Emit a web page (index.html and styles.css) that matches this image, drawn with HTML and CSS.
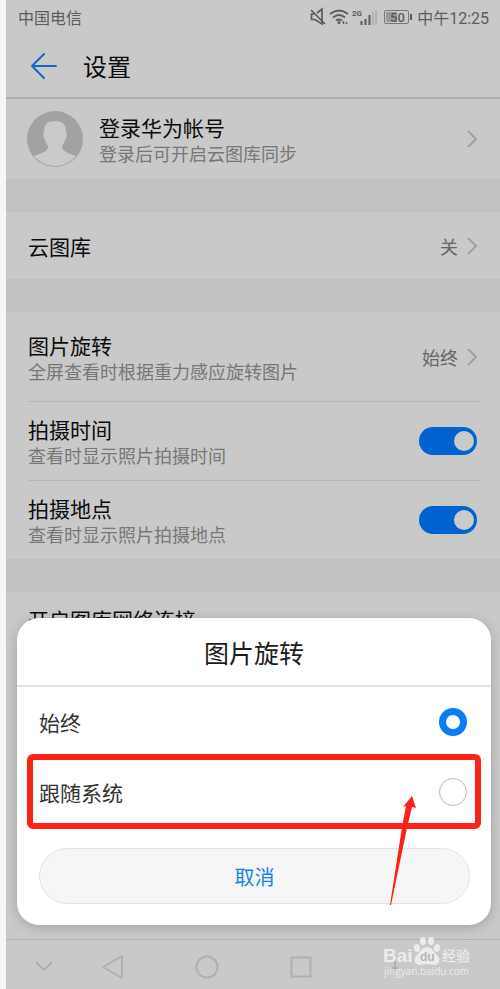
FILE: index.html
```html
<!DOCTYPE html>
<html lang="zh-CN">
<head>
<meta charset="utf-8">
<meta name="viewport" content="width=device-width, initial-scale=1">
<title>设置</title>
<link rel="stylesheet" href="styles.css">
</head>
<body>
<div class="screen">
  <div class="status">
    <span>中国电信</span>
    <div class="status-right">
      <svg class="status-icons" viewBox="0 0 102 20" fill="none" stroke="#5c5c5c" aria-hidden="true">
        <path d="M5 7H1.500v5.500H5l7 4.500V2L7 6M1 3l14 14" stroke-width="1.7"/>
        <path d="M20 7q9-7 18 0M23 10.500q6-5 12 0M26 13.500q3-2 6 0" stroke-width="1.8"/>
        <circle cx="29" cy="15.500" r="1.500" fill="#5c5c5c" stroke="none"/>
        <path d="M33.500 14v3m3-2v2" stroke-width="1.500"/>
        <text class="tiny" x="42" y="9">2G</text>
        <path d="M51.500 14v4M55.500 12v6M59.500 8v10" stroke-width="2"/>
        <path d="M63 5v13M66 3v15" stroke="#ababab" stroke-width="1.500"/>
        <rect x="74.500" y="3.500" width="24" height="13" rx="1.500" stroke="#777"/>
        <path d="M76 5h11v10H76z" fill="#999" stroke="none"/>
        <path d="M101 7v6" stroke-width="2"/>
        <text class="charge" x="80" y="15">50</text>
      </svg>
      <span>中午12:25</span>
    </div>
  </div>

  <header class="header">
    <button class="back" aria-label="返回">
      <svg viewBox="0 0 28 28" fill="none" stroke="#1768c4" stroke-width="2" stroke-linecap="round" stroke-linejoin="round"><path d="M26 14H2M14 2L2 14l12 12"/></svg>
    </button>
    <h1>设置</h1>
  </header>

  <main class="settings">
    <section class="group">
      <a class="row account" href="#account">
        <svg class="avatar" viewBox="0 0 56 56" aria-hidden="true">
          <circle cx="28" cy="28" r="28" fill="#a2a2a2"/>
          <path d="M28 10C20 10 17 14 17 20V22C15 23 17 28 18 29C19 33 21 34 21 36C21 40 15 42 7 45C12 51 20 55 28 55C36 55 44 51 49 45C41 42 35 40 35 36C35 34 37 33 38 29C39 28 41 23 39 22V20C39 14 36 10 28 10Z" fill="#cacaca"/>
        </svg>
        <span class="text"><span class="name">登录华为帐号</span><span class="note">登录后可开启云图库同步</span></span>
        <svg class="chevron" viewBox="0 0 12 20" aria-hidden="true"><path d="M2 2l8 8-8 8"/></svg>
      </a>
    </section>
    <section class="group">
      <a class="row cloud" href="#cloud">
        <span class="text"><span class="name">云图库</span></span>
        <span class="value">关</span>
        <svg class="chevron" viewBox="0 0 12 20" aria-hidden="true"><path d="M2 2l8 8-8 8"/></svg>
      </a>
    </section>
    <section class="group">
      <a class="row rotate" href="#rotate">
        <span class="text"><span class="name">图片旋转</span><span class="note">全屏查看时根据重力感应旋转图片</span></span>
        <span class="value">始终</span>
        <svg class="chevron" viewBox="0 0 12 20" aria-hidden="true"><path d="M2 2l8 8-8 8"/></svg>
      </a>
      <label class="row">
        <span class="text"><span class="name">拍摄时间</span><span class="note">查看时显示照片拍摄时间</span></span>
        <input class="switch" type="checkbox" checked>
      </label>
      <label class="row">
        <span class="text"><span class="name">拍摄地点</span><span class="note">查看时显示照片拍摄地点</span></span>
        <input class="switch" type="checkbox" checked>
      </label>
    </section>
    <section class="group">
      <a class="row" href="#network"><span class="text"><span class="name">开启图库网络连接</span></span></a>
    </section>
  </main>

  <nav class="nav">
    <button class="collapse" aria-label="收起"><svg viewBox="0 0 28 28"><path d="M6 9l8 8 8-8"/></svg></button>
    <button aria-label="返回"><svg viewBox="0 0 28 28"><path d="M23 3v22L4 14z"/></svg></button>
    <button aria-label="主屏幕"><svg viewBox="0 0 28 28"><circle cx="14" cy="14" r="10.500"/></svg></button>
    <button aria-label="最近任务"><svg viewBox="0 0 28 28"><path d="M4.500 4.500h19v19h-19z"/></svg></button>
    <button aria-label="通知"><svg viewBox="0 0 28 28"><path d="M11 15h6M14 6v12"/></svg></button>
  </nav>

  <div class="dialog" role="dialog" aria-labelledby="dialog-title">
    <h2 id="dialog-title">图片旋转</h2>
    <label class="option"><span>始终</span><input type="radio" name="rotation" checked></label>
    <label class="option marked"><span>跟随系统</span><input type="radio" name="rotation"></label>
    <button class="cancel">取消</button>
    <svg class="pointer" viewBox="0 0 28 112" aria-hidden="true"><path d="M22 1l4 12-4-1-5 21L1 110H0L12 32l4-21-3 1z" fill="#fb2317"/></svg>
  </div>

  <svg class="watermark" viewBox="0 0 92 46" aria-hidden="true" fill="#ececec">
    <text class="wm-brand" x="0" y="27">Bai</text>
    <ellipse cx="34" cy="13" rx="3" ry="4" transform="rotate(-15 34 13)"/>
    <ellipse cx="40" cy="6" rx="3" ry="4"/>
    <ellipse cx="48" cy="6" rx="3" ry="4"/>
    <ellipse cx="54" cy="13" rx="3" ry="4" transform="rotate(15 54 13)"/>
    <path d="M44 12c-5 0-6 4-9 7-3 2-4 5-3 8 2 5 7 2 12 2s10 3 12-2c1-3 0-6-3-8-3-3-4-7-9-7z"/>
    <text class="wm-du" x="37" y="26">du</text>
    <text class="wm-cn" x="59" y="26">经验</text>
    <text class="wm-url" x="1" y="40">jingyan.baidu.com</text>
  </svg>
</div>
</body>
</html>
```
FILE: styles.css
```css
* { box-sizing: border-box; }

body {
  margin: 0;
  padding-left: 6px;
  background: #f6f6f6;
  color: #0c0c0c;
  font-family: "Noto Sans CJK SC", sans-serif;
}

button {
  padding: 0;
  border: 0;
  background: none;
  font: inherit;
}

h1, h2 { margin: 0; font-weight: 400; }

.screen {
  position: relative;
  display: flex;
  flex-direction: column;
  min-height: 100vh;
  background: #c1c1c1;
  overflow: hidden;
}

.status {
  display: flex;
  justify-content: space-between;
  align-items: center;
  height: 34px;
  padding: 0 11px 0 12px;
  background: #c9c9c9;
  color: #5c5c5c;
  font-family: Roboto, "Noto Sans CJK SC", sans-serif;
  font-size: 16px;
}
.status-right { display: flex; align-items: center; gap: 5px; }
.status-icons { width: 102px; height: 20px; }
.tiny, .charge { font-family: Roboto, sans-serif; fill: #5c5c5c; stroke: none; }
.tiny { font-size: 8px; font-weight: 700; }
.charge { font-size: 13px; font-weight: 500; }

.header {
  display: flex;
  align-items: center;
  gap: 25px;
  height: 65px;
  padding-left: 24px;
  background: #c9c9c9;
  border-bottom: 2px solid #afafaf;
}
.header h1 { font-size: 24px; }
.back, .back svg { display: block; width: 28px; height: 28px; }

.settings {
  display: flex;
  flex-direction: column;
  flex: 1;
  gap: 33px;
}
.group { padding: 0 19px 0 22px; background: #c9c9c9; }
.group:last-child { flex: 1; }
.row {
  display: flex;
  align-items: center;
  padding: 13px 0;
  color: inherit;
  text-decoration: none;
}
.row + .row { border-top: 1px solid #b7b7b7; }
.account { padding: 14px 0; }
.cloud { padding: 20px 0 19px; }
.rotate { padding: 19px 0 18px; }
.avatar { width: 56px; height: 56px; margin: -2px 16px -2px -1px; }
.text { flex: 1; display: flex; flex-direction: column; }
.name { font-size: 21px; line-height: 28px; }
.note { color: #777; font-size: 18px; line-height: 24px; }
.value { margin-right: 8px; color: #666; font-size: 18px; line-height: 24px; }
.chevron {
  width: 12px;
  height: 20px;
  margin-right: 3px;
  fill: none;
  stroke: #a0a0a0;
  stroke-width: 2;
}

.switch {
  appearance: none;
  display: flex;
  justify-content: flex-end;
  width: 58px;
  height: 28px;
  margin: 0 4px 0 0;
  padding: 4px 3px;
  border-radius: 14px;
  background: #0063d0;
}
.switch::before {
  content: "";
  width: 20px;
  height: 20px;
  border-radius: 50%;
  background: #cacaca;
}

.nav {
  display: flex;
  height: 50px;
  padding: 4px 58px 0 16px;
  background: #c9c9c9;
  border-top: 1px solid #aeaeae;
}
.nav button {
  flex: 1;
  display: flex;
  align-items: center;
  justify-content: center;
}
.nav .collapse { flex: 0 0 44px; }
.nav svg {
  width: 28px;
  height: 28px;
  fill: none;
  stroke: #b0b0b0;
  stroke-width: 2;
  stroke-linejoin: round;
}

.dialog {
  position: absolute;
  left: 11px;
  right: 9px;
  bottom: 64px;
  padding-bottom: 21px;
  border-radius: 22px;
  background: #fff;
  box-shadow: 0 2px 12px rgba(0, 0, 0, 0.2);
}
.dialog h2 {
  height: 69px;
  border-bottom: 2px solid #e3e3e3;
  color: #1c1c1c;
  font-size: 25px;
  line-height: 68px;
  text-align: center;
}
.option {
  position: relative;
  display: flex;
  align-items: center;
  justify-content: space-between;
  height: 70px;
  padding: 0 24px 0 22px;
  color: #333;
  font-size: 21px;
}
.option input {
  appearance: none;
  width: 28px;
  height: 28px;
  margin: 0;
  border: 1px solid #bbb;
  border-radius: 50%;
  background: #fff;
}
.option input:checked { border: 7px solid #0a7cf5; }
.marked::after {
  content: "";
  position: absolute;
  inset: -3px 10px -2px;
  border: 6px solid #fb2317;
  border-radius: 6px;
}
.cancel {
  display: block;
  width: calc(100% - 43px);
  height: 56px;
  margin: 21px 21px 0 22px;
  border: 1px solid #e3e3e3;
  border-radius: 28px;
  background: #f6f6f6;
  color: #1a80e6;
  font-size: 20px;
}
.pointer {
  position: absolute;
  right: 73px;
  bottom: 18px;
  width: 28px;
  height: 112px;
}

.watermark {
  position: absolute;
  right: 25px;
  bottom: 8px;
  width: 92px;
  height: 46px;
}
.wm-brand { font: 700 19px "Liberation Sans", sans-serif; }
.wm-du { font: 700 12px "Liberation Sans", sans-serif; fill: #b5b5b5; }
.wm-cn { font: 500 14px "Noto Sans CJK SC", sans-serif; }
.wm-url { font: 10px "Open Sans", sans-serif; }
```
